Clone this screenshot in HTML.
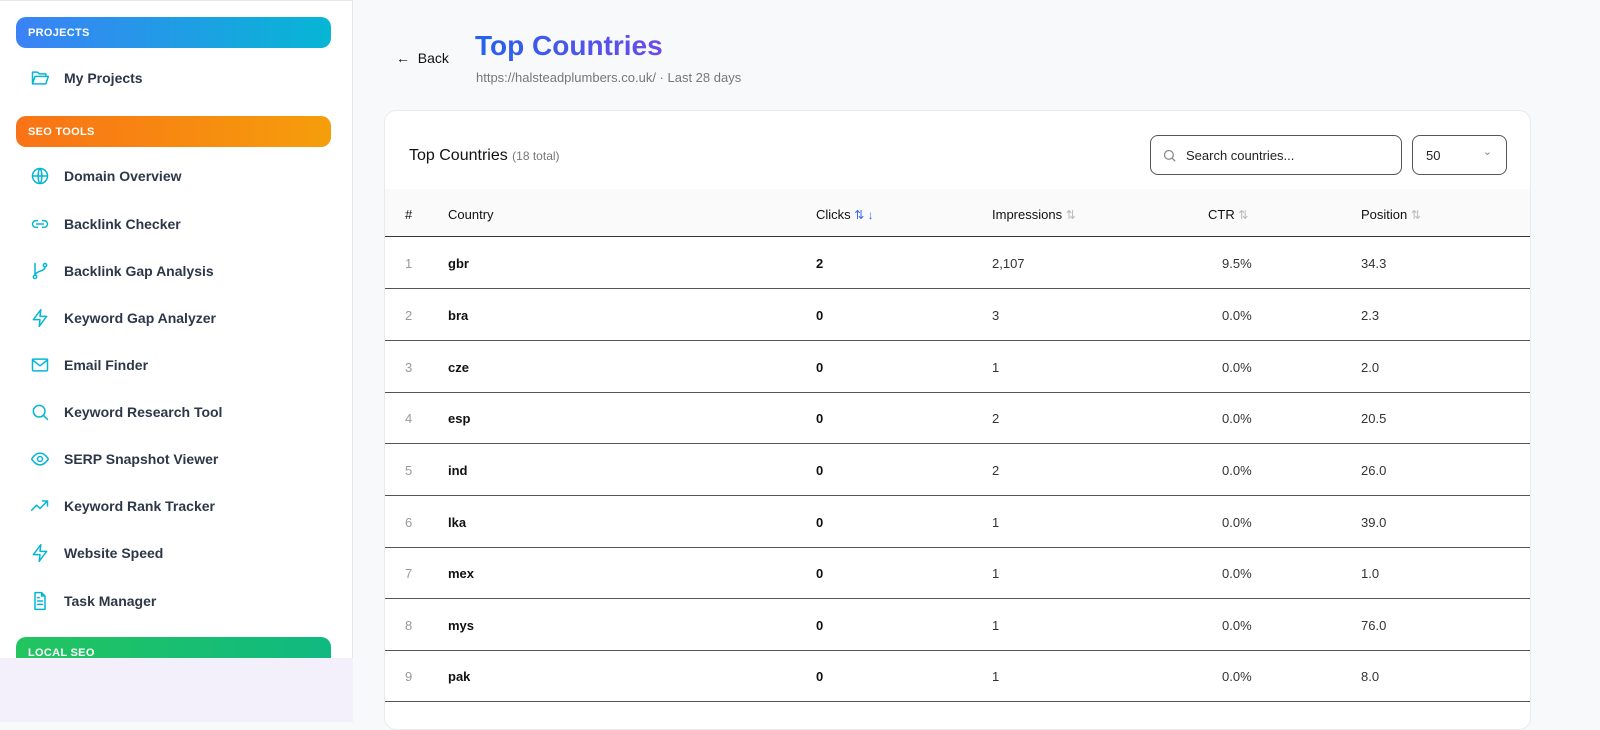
<!DOCTYPE html>
<html><head><meta charset="utf-8"><style>
*{box-sizing:border-box;margin:0;padding:0}
body{width:1600px;height:722px;overflow:hidden;background:#f8f9fb;font-family:"Liberation Sans",sans-serif;position:relative}
.sb{position:absolute;left:0;top:0;width:353px;height:658px;background:#fff;border-right:1px solid #e5e7eb;border-top:1px solid #e5e7eb}
.lav{position:absolute;left:0;top:658px;width:353px;height:64px;background:#f3f0fb}
.hd{position:absolute;left:16px;width:315px;height:31px;border-radius:10px;color:#fff;font-weight:bold;font-size:11px;letter-spacing:.3px;padding:10px 12px}
.it{position:absolute;left:30px;height:20px;display:flex;align-items:center;font-weight:bold;font-size:14px;color:#2d3748}
.it svg{width:20px;height:20px;margin-right:14px;fill:none;stroke:#06b6d4;stroke-width:1.8;stroke-linecap:round;stroke-linejoin:round}
.card{position:absolute;left:384px;top:110px;width:1147px;height:620px;background:#fff;border:1px solid #e8eaee;border-radius:12px;overflow:hidden}
.row{position:absolute;left:0;width:1147px;height:52px;border-bottom:1.5px solid #555;font-size:13px;color:#333}
.row>span{position:absolute;top:19px;white-space:nowrap}
.c0{left:20px;color:#999}.c1{left:63px;font-weight:bold;color:#111}.c2{left:431px;font-weight:bold;color:#111}.c3{left:607px}.c4{left:837px}.c5{left:976px}
.ar{color:#bbb;font-size:12px}
</style></head><body>
<div class="sb">
<div class="hd" style="top:16px;background:linear-gradient(90deg,#3b82f6,#06b6d4)">PROJECTS</div>
<div class="it" style="top:67px"><svg viewBox="0 0 24 24"><path d="M3 19V5h6l2 2h8v3M3 19l3-9h16l-3 9z"/></svg>My Projects</div>
<div class="hd" style="top:115px;background:linear-gradient(90deg,#f97316,#f59e0b)">SEO TOOLS</div>
<div class="it" style="top:165px"><svg viewBox="0 0 24 24"><circle cx="12" cy="12" r="9"/><path d="M3 12h18M12 3c3 3 3 15 0 18M12 3c-3 3-3 15 0 18"/></svg>Domain Overview</div>
<div class="it" style="top:213px"><svg viewBox="0 0 24 24"><path d="M9 8H7a4 4 0 000 8h2M15 8h2a4 4 0 010 8h-2M8 12h8"/></svg>Backlink Checker</div>
<div class="it" style="top:260px"><svg viewBox="0 0 24 24"><circle cx="6" cy="19" r="2"/><circle cx="18" cy="5" r="2"/><path d="M6 3v14M18 7c0 6-10 4-12 10"/></svg>Backlink Gap Analysis</div>
<div class="it" style="top:307px"><svg viewBox="0 0 24 24"><path d="M13 2L4 14h8l-1 8 9-12h-8z"/></svg>Keyword Gap Analyzer</div>
<div class="it" style="top:354px"><svg viewBox="0 0 24 24"><rect x="3" y="5" width="18" height="14" rx="1"/><path d="M3 6l9 7 9-7"/></svg>Email Finder</div>
<div class="it" style="top:401px"><svg viewBox="0 0 24 24"><circle cx="11" cy="11" r="7"/><path d="M16 16l5 5"/></svg>Keyword Research Tool</div>
<div class="it" style="top:448px"><svg viewBox="0 0 24 24"><path d="M2 12s4-7 10-7 10 7 10 7-4 7-10 7S2 12 2 12z"/><circle cx="12" cy="12" r="3"/></svg>SERP Snapshot Viewer</div>
<div class="it" style="top:495px"><svg viewBox="0 0 24 24"><path d="M2 17l6-6 4 4 9-9M15 6h6v6"/></svg>Keyword Rank Tracker</div>
<div class="it" style="top:542px"><svg viewBox="0 0 24 24"><path d="M13 2L4 14h8l-1 8 9-12h-8z"/></svg>Website Speed</div>
<div class="it" style="top:590px"><svg viewBox="0 0 24 24"><path d="M14 2H6v20h12V6zM14 2v4h4M9 12h6M9 16h6M9 8h2"/></svg>Task Manager</div>
<div class="hd" style="top:636px;height:40px;background:linear-gradient(90deg,#22c55e,#10b981)">LOCAL SEO</div>
</div>
<div class="lav"></div>
<div style="position:absolute;left:396px;top:50px;font-size:14px;color:#111">&#8592;&nbsp;&nbsp;Back</div>
<div style="position:absolute;left:475px;top:30px;font-size:28px;font-weight:bold;background:linear-gradient(90deg,#2563eb,#6d4aea);-webkit-background-clip:text;color:transparent">Top Countries</div>
<div style="position:absolute;left:476px;top:70px;font-size:13px;color:#777">https://halsteadplumbers.co.uk/ · Last 28 days</div>
<div class="card">
<div style="position:absolute;left:24px;top:36px;font-size:16px;color:#111">Top Countries <span style="font-size:12px;color:#777">(18 total)</span></div>
<div style="position:absolute;left:765px;top:24px;width:252px;height:40px;border:1px solid #555;border-radius:8px;font-size:13px;color:#222;padding:12px 0 0 35px">Search countries...
<svg style="position:absolute;left:11px;top:12px" width="15" height="15" viewBox="0 0 24 24" fill="none" stroke="#888" stroke-width="2"><circle cx="11" cy="11" r="7"/><path d="M16 16l5 5"/></svg></div>
<div style="position:absolute;left:1027px;top:24px;width:95px;height:40px;border:1px solid #555;border-radius:8px;font-size:13px;color:#222;padding:12px 0 0 13px">50<span style="position:absolute;right:14px;top:9px;color:#888;font-size:11px">&#8964;</span></div>
<div class="row" style="top:78px;height:48px;background:#fafafa;border-bottom:1.5px solid #333;color:#111">
<span style="left:20px;top:18px">#</span><span style="left:63px;top:18px">Country</span>
<span style="left:431px;top:18px">Clicks <span style="color:#3b6cf0;font-size:12px">⇅ ↓</span></span>
<span style="left:607px;top:18px">Impressions <span class="ar">⇅</span></span>
<span style="left:823px;top:18px">CTR <span class="ar">⇅</span></span>
<span style="left:976px;top:18px">Position <span class="ar">⇅</span></span></div>
<div class="row" style="top:126px"><span class="c0">1</span><span class="c1">gbr</span><span class="c2">2</span><span class="c3">2,107</span><span class="c4">9.5%</span><span class="c5">34.3</span></div>
<div class="row" style="top:178px"><span class="c0">2</span><span class="c1">bra</span><span class="c2">0</span><span class="c3">3</span><span class="c4">0.0%</span><span class="c5">2.3</span></div>
<div class="row" style="top:230px"><span class="c0">3</span><span class="c1">cze</span><span class="c2">0</span><span class="c3">1</span><span class="c4">0.0%</span><span class="c5">2.0</span></div>
<div class="row" style="top:281px"><span class="c0">4</span><span class="c1">esp</span><span class="c2">0</span><span class="c3">2</span><span class="c4">0.0%</span><span class="c5">20.5</span></div>
<div class="row" style="top:333px"><span class="c0">5</span><span class="c1">ind</span><span class="c2">0</span><span class="c3">2</span><span class="c4">0.0%</span><span class="c5">26.0</span></div>
<div class="row" style="top:385px"><span class="c0">6</span><span class="c1">lka</span><span class="c2">0</span><span class="c3">1</span><span class="c4">0.0%</span><span class="c5">39.0</span></div>
<div class="row" style="top:436px"><span class="c0">7</span><span class="c1">mex</span><span class="c2">0</span><span class="c3">1</span><span class="c4">0.0%</span><span class="c5">1.0</span></div>
<div class="row" style="top:488px"><span class="c0">8</span><span class="c1">mys</span><span class="c2">0</span><span class="c3">1</span><span class="c4">0.0%</span><span class="c5">76.0</span></div>
<div class="row" style="top:539px"><span class="c0">9</span><span class="c1">pak</span><span class="c2">0</span><span class="c3">1</span><span class="c4">0.0%</span><span class="c5">8.0</span></div>
</div>
</body></html>
